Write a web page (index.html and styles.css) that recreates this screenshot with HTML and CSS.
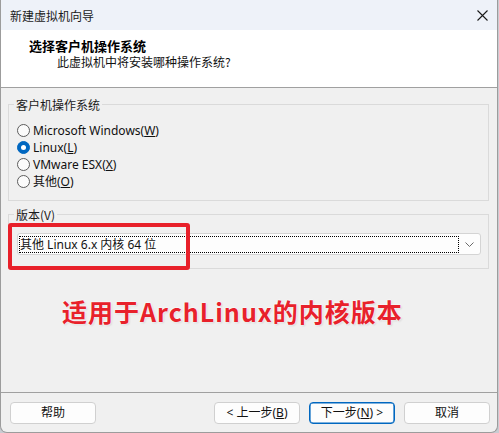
FILE: index.html
```html
<!DOCTYPE html>
<html lang="zh-CN">
<head>
<meta charset="utf-8">
<title>新建虚拟机向导</title>
<link rel="stylesheet" href="styles.css">
</head>
<body>
<div class="window">
  <div class="titlebar">
    <span class="title">新建虚拟机向导</span>
    <svg class="close" width="11" height="11" viewBox="0 0 11 11"><path d="M0.5 0.5 L10.5 10.5 M10.5 0.5 L0.5 10.5" stroke="#1a1a1a" stroke-width="1.1" fill="none"/></svg>
  </div>
  <div class="header">
    <div class="h-title">选择客户机操作系统</div>
    <div class="h-sub">此虚拟机中将安装哪种操作系统?</div>
  </div>
  <div class="content">
    <fieldset class="group g-os">
      <legend>客户机操作系统</legend>
      <div class="radio"><span class="dot"></span><span>Microsoft Windows(<u>W</u>)</span></div>
      <div class="radio"><span class="dot checked"></span><span>Linux(<u>L</u>)</span></div>
      <div class="radio"><span class="dot"></span><span>VMware ESX(<u>X</u>)</span></div>
      <div class="radio"><span class="dot"></span><span>其他(<u>O</u>)</span></div>
    </fieldset>
    <fieldset class="group g-ver">
      <legend>版本(V)</legend>
      <div class="combo">
        <div class="focus">其他 Linux 6.x 内核 64 位</div>
        <svg class="chev" width="9" height="5" viewBox="0 0 9 5"><path d="M0.5 0.5 L4.5 4.5 L8.5 0.5" stroke="#6a6a6a" stroke-width="1" fill="none"/></svg>
      </div>
    </fieldset>
    <div class="note">适用于ArchLinux的内核版本</div>
  </div>
  <div class="footer">
    <button class="btn">帮助</button>
    <div class="spacer"></div>
    <button class="btn">&lt; 上一步(<u>B</u>)</button>
    <button class="btn default">下一步(<u>N</u>) &gt;</button>
    <button class="btn">取消</button>
  </div>
  <div class="redbox"></div>
</div>
</body>
</html>
```

FILE: styles.css
```css
* { box-sizing: border-box; }
html, body { margin: 0; padding: 0; }
body {
  width: 499px;
  height: 433px;
  background: #c9ccd2;
  font-family: "Noto Sans", "Noto Sans CJK SC", sans-serif;
  font-size: 12px;
  color: #111;
  overflow: hidden;
}
.window {
  position: relative;
  width: 498px;
  height: 433px;
  background: #f0f0f0;
  border: 1px solid #9c9c9c;
  border-top: none;
  border-radius: 0 0 7px 7px;
  display: flex;
  flex-direction: column;
  overflow: hidden;
}
.titlebar {
  height: 30px;
  flex: none;
  background: #eef2f9;
  display: flex;
  align-items: center;
  padding: 0 9px 0 9px;
}
.title { flex: 1; font-family: "Noto Sans CJK SC", sans-serif; font-size: 12px; color: #1a1a1a; }
.close { margin-right: 0; }
.header {
  height: 58px;
  flex: none;
  background: #fff;
  border-bottom: 1px solid #a0a0a0;
  padding: 8px 0 0 28px;
  font-family: "Noto Sans CJK SC", sans-serif;
}
.h-title { font-size: 13px; font-weight: 700; line-height: 16px; color: #000; }
.h-sub { font-size: 12px; line-height: 16px; padding-left: 28px; color: #111; }
.content {
  flex: 1;
  padding: 9px 8px 0 7px;
}
.group {
  margin: 0;
  border: 1px solid #dadada;
  padding: 10px 7px 10px 8px;
  min-width: 0;
}
.group legend {
  padding: 0 2px;
  margin-left: -3px;
  line-height: 15px;
  font-family: "Noto Sans CJK SC", sans-serif;
  color: #1a1a1a;
}
.radio {
  height: 17px;
  display: flex;
  align-items: center;
  gap: 3px;
}
.radio span:last-child { line-height: 17px; }
.dot {
  width: 13px;
  height: 13px;
  border-radius: 50%;
  border: 1px solid #5c5c5c;
  background: #fbfbfb;
  display: flex;
  align-items: center;
  justify-content: center;
  flex: none;
}
.dot.checked { background: #0067c0; border-color: #0067c0; }
.dot.checked::after {
  content: "";
  width: 5px;
  height: 5px;
  border-radius: 50%;
  background: #fff;
}
.g-ver { margin-top: 6px; padding: 11px 7px 13px 8px; }
.combo {
  height: 22px;
  background: #fdfdfd;
  border: 1px solid #d4d4d4;
  border-radius: 3px;
  display: flex;
  align-items: center;
  padding: 2px 3px 1px 1px;
}
.focus {
  flex: 1;
  height: 17px;
  border: 1px dotted #000;
  line-height: 15px;
  padding-left: 0;
  margin-right: 6px;
  color: #111;
}
.chev { margin-right: 3px; }
.note {
  margin: 27px 0 0 54px;
  font-family: "Noto Sans CJK SC", sans-serif;
  font-size: 25px;
  font-weight: 700;
  letter-spacing: 1px;
  line-height: 30px;
  color: #e8212b;
  text-shadow: 0 0 2px #fff, 0 0 2px #fff, 1px 1px 2px rgba(0,0,0,0.15);
}
.footer {
  flex: none;
  height: 40px;
  border-top: 1px solid #a0a0a0;
  display: flex;
  align-items: flex-start;
  gap: 9px;
  padding: 9px 7px 0 9px;
}
.spacer { flex: 1; }
.btn {
  width: 86px;
  height: 22px;
  background: #fdfdfd;
  border: 1px solid #d0d0d0;
  border-radius: 4px;
  font-family: "Noto Sans", "Noto Sans CJK SC", sans-serif;
  font-size: 12px;
  color: #111;
  padding: 0;
  line-height: 18px;
}
.btn.default { border-color: #0067c0; box-shadow: inset 0 0 0 0.6px #0067c0; }
.redbox {
  position: absolute;
  left: 7px;
  top: 223px;
  width: 182px;
  height: 47px;
  border: 4px solid #e8202a;
  border-radius: 3px;
}
```
